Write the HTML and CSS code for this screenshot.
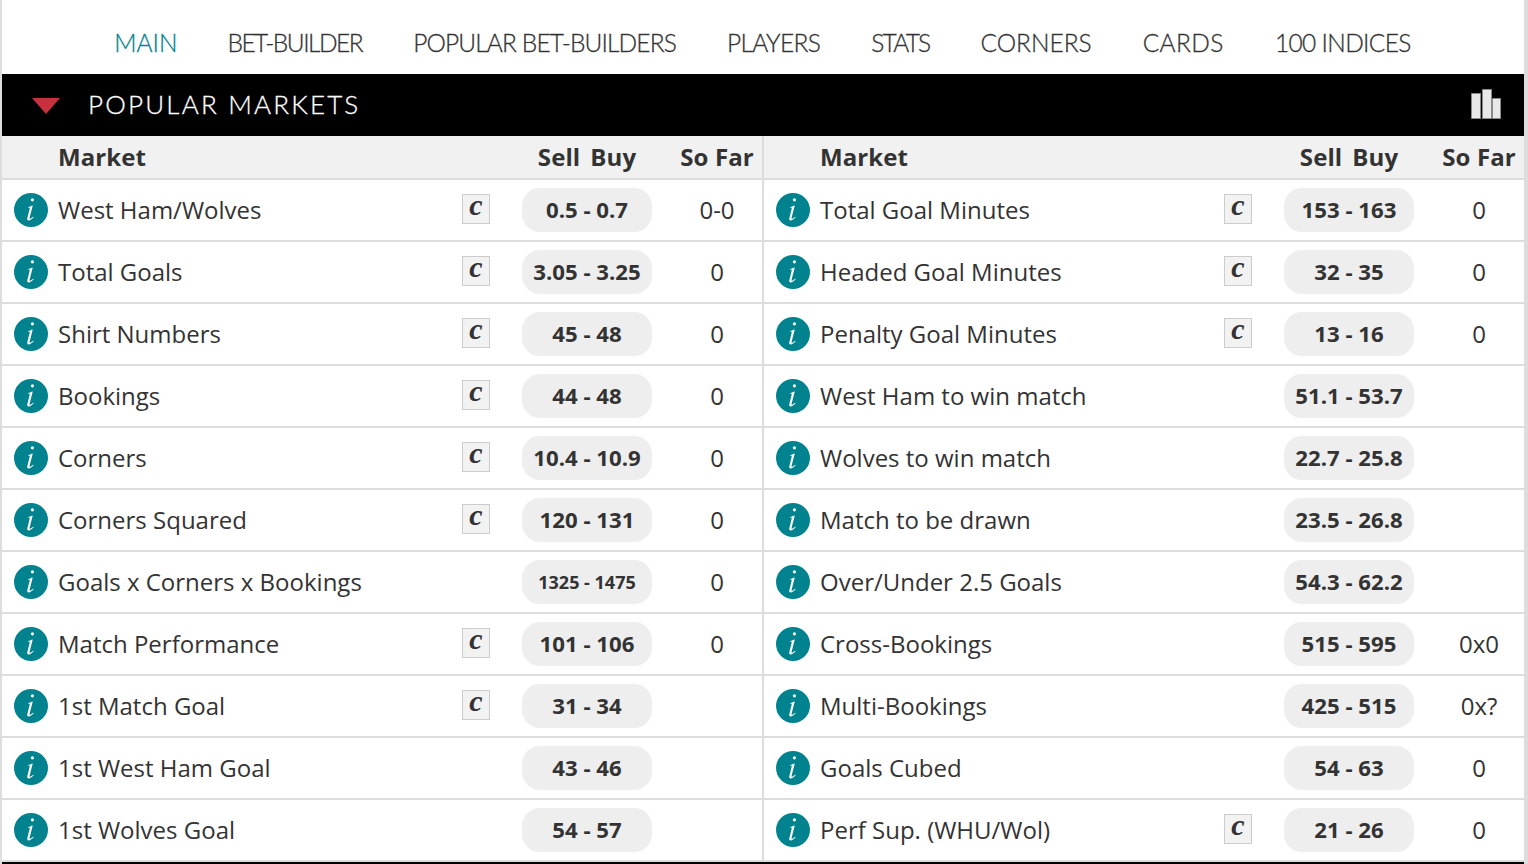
FILE: index.html
```html
<!DOCTYPE html>
<html lang="en">
<head>
<meta charset="utf-8">
<title>Popular Markets</title>
<link rel="stylesheet" href="styles.css">
</head>
<body>
<svg class="defs" width="0" height="0" aria-hidden="true">
  <symbol id="info" viewBox="0 0 34 34">
    <circle cx="17" cy="17" r="17" fill="#00838f"/>
    <circle cx="18.4" cy="6.800" r="1.600" fill="#fff"/>
    <path d="M13.800 14.300c1.500-.5 3-1.200 4.400-1.800l.5.3-3.100 12c-.3 1.100.2 1.300 1 .8l2.700-1.900.4.5c-1.800 1.700-3.600 3.200-5 3.200-1.300 0-1.700-.9-1.400-2.200l2.400-9.700c.2-.9-.1-1.200-1.400-.7z" fill="#fff"/>
  </symbol>
</svg>
<main class="page">
  <nav class="tabs">
    <a class="tab active">MAIN</a>
    <a class="tab">BET-BUILDER</a>
    <a class="tab">POPULAR BET-BUILDERS</a>
    <a class="tab">PLAYERS</a>
    <a class="tab">STATS</a>
    <a class="tab">CORNERS</a>
    <a class="tab">CARDS</a>
    <a class="tab">100 INDICES</a>
  </nav>
  <header class="bar">
    <span class="caret"></span>
    <h1 class="title">POPULAR MARKETS</h1>
    <svg class="chart" width="30" height="30" viewBox="0 0 30 30" aria-hidden="true">
      <path d="M.5 4.500h9v25h-9zM11.500 .5h9v29h-9zM21.500 9.500h8v20h-8z" fill="#e8e8e8" stroke="#8a8a8a" stroke-width="1"/>
    </svg>
  </header>
  <section class="columns">
    <div class="column">
      <div class="head"><span class="h-market">Market</span><span class="h-price"><span>Sell</span><span>Buy</span></span><span class="h-far">So Far</span></div>
      <div class="row"><svg class="info"><use href="#info"/></svg><span class="name">West Ham/Wolves</span><span class="cbox">c</span><span class="pill">0.5 - 0.7</span><span class="far">0-0</span></div>
      <div class="row"><svg class="info"><use href="#info"/></svg><span class="name">Total Goals</span><span class="cbox">c</span><span class="pill">3.05 - 3.25</span><span class="far">0</span></div>
      <div class="row"><svg class="info"><use href="#info"/></svg><span class="name">Shirt Numbers</span><span class="cbox">c</span><span class="pill">45 - 48</span><span class="far">0</span></div>
      <div class="row"><svg class="info"><use href="#info"/></svg><span class="name">Bookings</span><span class="cbox">c</span><span class="pill">44 - 48</span><span class="far">0</span></div>
      <div class="row"><svg class="info"><use href="#info"/></svg><span class="name">Corners</span><span class="cbox">c</span><span class="pill">10.4 - 10.9</span><span class="far">0</span></div>
      <div class="row"><svg class="info"><use href="#info"/></svg><span class="name">Corners Squared</span><span class="cbox">c</span><span class="pill">120 - 131</span><span class="far">0</span></div>
      <div class="row"><svg class="info"><use href="#info"/></svg><span class="name">Goals x Corners x Bookings</span><span class="pill small">1325 - 1475</span><span class="far">0</span></div>
      <div class="row"><svg class="info"><use href="#info"/></svg><span class="name">Match Performance</span><span class="cbox">c</span><span class="pill">101 - 106</span><span class="far">0</span></div>
      <div class="row"><svg class="info"><use href="#info"/></svg><span class="name">1st Match Goal</span><span class="cbox">c</span><span class="pill">31 - 34</span><span class="far"></span></div>
      <div class="row"><svg class="info"><use href="#info"/></svg><span class="name">1st West Ham Goal</span><span class="pill">43 - 46</span><span class="far"></span></div>
      <div class="row"><svg class="info"><use href="#info"/></svg><span class="name">1st Wolves Goal</span><span class="pill">54 - 57</span><span class="far"></span></div>
    </div>
    <div class="column">
      <div class="head"><span class="h-market">Market</span><span class="h-price"><span>Sell</span><span>Buy</span></span><span class="h-far">So Far</span></div>
      <div class="row"><svg class="info"><use href="#info"/></svg><span class="name">Total Goal Minutes</span><span class="cbox">c</span><span class="pill">153 - 163</span><span class="far">0</span></div>
      <div class="row"><svg class="info"><use href="#info"/></svg><span class="name">Headed Goal Minutes</span><span class="cbox">c</span><span class="pill">32 - 35</span><span class="far">0</span></div>
      <div class="row"><svg class="info"><use href="#info"/></svg><span class="name">Penalty Goal Minutes</span><span class="cbox">c</span><span class="pill">13 - 16</span><span class="far">0</span></div>
      <div class="row"><svg class="info"><use href="#info"/></svg><span class="name">West Ham to win match</span><span class="pill">51.1 - 53.7</span><span class="far"></span></div>
      <div class="row"><svg class="info"><use href="#info"/></svg><span class="name">Wolves to win match</span><span class="pill">22.7 - 25.8</span><span class="far"></span></div>
      <div class="row"><svg class="info"><use href="#info"/></svg><span class="name">Match to be drawn</span><span class="pill">23.5 - 26.8</span><span class="far"></span></div>
      <div class="row"><svg class="info"><use href="#info"/></svg><span class="name">Over/Under 2.5 Goals</span><span class="pill">54.3 - 62.2</span><span class="far"></span></div>
      <div class="row"><svg class="info"><use href="#info"/></svg><span class="name">Cross-Bookings</span><span class="pill">515 - 595</span><span class="far">0x0</span></div>
      <div class="row"><svg class="info"><use href="#info"/></svg><span class="name">Multi-Bookings</span><span class="pill">425 - 515</span><span class="far">0x?</span></div>
      <div class="row"><svg class="info"><use href="#info"/></svg><span class="name">Goals Cubed</span><span class="pill">54 - 63</span><span class="far">0</span></div>
      <div class="row"><svg class="info"><use href="#info"/></svg><span class="name">Perf Sup. (WHU/Wol)</span><span class="cbox">c</span><span class="pill">21 - 26</span><span class="far">0</span></div>
    </div>
  </section>
  <div class="foot"></div>
</main>
</body>
</html>
```
FILE: styles.css
```css
* { box-sizing: border-box; }
html, body { margin: 0; padding: 0; background: #fff; }
body { font-family: "Open Sans", "Liberation Sans", sans-serif; color: #333; overflow: hidden; }
.defs { display: block; height: 0; }
.page { width: 1528px; height: 864px; border-left: 2px solid #ddd; border-right: 4px solid #ddd; display: flex; flex-direction: column; }

.tabs { height: 74px; display: flex; justify-content: center; gap: 51px; padding: 27px 2px 0 0; font-family: Lato, "Liberation Sans", sans-serif; font-size: 24.5px; font-weight: 300; letter-spacing: -0.8px; line-height: 32px; color: #333; -webkit-text-stroke: 0.3px #333; }
.tab { white-space: nowrap; }
.tab.active { color: #00838f; -webkit-text-stroke: 0.3px #00838f; letter-spacing: 0; margin-left: 1px; margin-right: -1px; }
.tab:nth-child(2) { letter-spacing: -1.5px; }
.tab:nth-child(3) { letter-spacing: -0.85px; }
.tab:nth-child(4) { letter-spacing: -0.65px; }
.tab:nth-child(5) { letter-spacing: -1.8px; }
.tab:nth-child(6) { letter-spacing: 0; }
.tab:nth-child(7) { letter-spacing: 0.4px; }
.tab:nth-child(8) { letter-spacing: -0.65px; }

.bar { height: 62px; background: #000; display: flex; align-items: center; padding-left: 30px; padding-right: 23px; }
.caret { width: 0; height: 0; border-left: 14px solid transparent; border-right: 14px solid transparent; border-top: 16px solid #c8303c; margin-top: 1px; }
.title { margin: -2px 0 0 28px; flex: 1; font-family: Lato, "Liberation Sans", sans-serif; font-size: 26px; font-weight: 300; letter-spacing: 2.2px; color: #fff; line-height: 62px; -webkit-text-stroke: 0.3px #fff; }
.chart { display: block; margin-top: -2px; }

.columns { display: flex; flex: 1; min-height: 0; }
.column { flex: none; width: 762px; }
.column:first-child { width: 760px; }
.column + .column { border-left: 2px solid #ddd; }

.head { height: 44px; background: #f1f1f1; border-bottom: 2px solid #ddd; display: flex; align-items: center; font-size: 24px; font-weight: 700; letter-spacing: 0.1px; line-height: 42px; white-space: nowrap; }
.h-market { margin-left: 56px; flex: 1; }
.h-price { width: 130px; display: flex; justify-content: center; gap: 10px; margin-right: 30px; }
.h-far { width: 70px; margin-right: 10px; display: flex; justify-content: center; }

.row { height: 62px; border-bottom: 2px solid #ddd; display: flex; align-items: center; padding-left: 12px; }
.info { width: 34px; height: 34px; flex: none; margin-right: 10px; }
.name { flex: 1; font-size: 24px; line-height: 34px; white-space: nowrap; }
.cbox { width: 28px; height: 30px; border: 1px solid #ccc; background: #f2f2f2; margin-right: 32px; margin-top: -2px; display: flex; align-items: center; justify-content: center; font-family: "Liberation Serif", serif; font-style: italic; font-weight: 700; font-size: 30px; line-height: 24px; padding-bottom: 9px; color: #333; }
.pill { width: 130px; height: 44px; background: #eee; border-radius: 18px; margin-right: 30px; padding-bottom: 2px; display: flex; align-items: center; justify-content: center; font-size: 22.2px; font-weight: 700; white-space: nowrap; }
.pill.small { font-size: 18px; padding-bottom: 0; }
.far { width: 70px; margin-right: 10px; text-align: center; font-size: 24px; line-height: 34px; }

.foot { height: 2px; background: #000; flex: none; }
```
